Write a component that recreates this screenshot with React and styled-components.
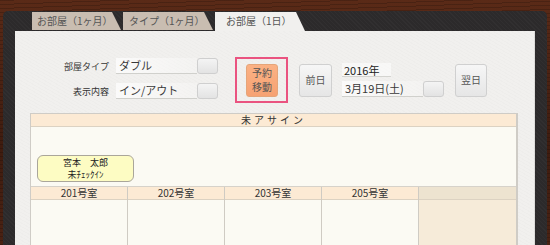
import React from 'react';
import styled, { createGlobalStyle } from 'styled-components';

const GlobalStyle = createGlobalStyle`
  html, body {
    margin: 0;
    padding: 0;
    overflow: hidden;
  }
  body {
    font-family: "Noto Sans CJK JP", "Noto Sans", sans-serif;
  }
`;

// 木目の背景
const Wood = styled.div`
  width: 550px;
  height: 245px;
  box-sizing: border-box;
  padding: 11px 3px 0;
  background:
    repeating-linear-gradient(178deg, rgba(0, 0, 0, 0.18) 0 1px, transparent 1px 4px),
    linear-gradient(180deg, #5a2a17 0%, #3f1c0f 60%, #4a2213 100%);
  overflow: hidden;
`;

// 黒い革のフレーム
const Frame = styled.div`
  height: 100%;
  box-sizing: border-box;
  padding: 1px 12px 0;
  border-radius: 5px 5px 0 0;
  background:
    repeating-linear-gradient(45deg, rgba(255, 255, 255, 0.025) 0 1px, transparent 1px 3px),
    #2c2a2b;
  display: flex;
  flex-direction: column;
`;

const TabBar = styled.div`
  display: flex;
  align-items: flex-start;
  gap: 2px;
  padding-left: 17px;
  height: 19px;
`;

const Tab = styled.div`
  width: ${({ $w }) => $w}px;
  height: ${({ $active }) => ($active ? 19 : 18)}px;
  box-sizing: border-box;
  padding-left: ${({ $pad }) => $pad}px;
  background: ${({ $active }) => ($active ? '#f1f0ee' : '#c9bdb1')};
  color: #555;
  font-size: 10px;
  line-height: 18px;
  white-space: nowrap;
  clip-path: polygon(0 0, calc(100% - 9px) 0, 100% 100%, 0 100%);
`;

// 白い紙のパネル
const Panel = styled.div`
  flex: 1;
  background:
    repeating-linear-gradient(30deg, rgba(0, 0, 0, 0.012) 0 1px, transparent 1px 3px),
    #f1f0ee;
  padding: 26px 17px 0 15px;
  box-shadow: inset -1px 0 0 rgba(0, 0, 0, 0.08);
`;

const Controls = styled.div`
  display: flex;
  align-items: center;
  height: 46px;
  margin-bottom: 10px;
`;

const FormGrid = styled.div`
  display: grid;
  grid-template-columns: 54px 102px;
  column-gap: 7px;
  row-gap: 9px;
  align-items: center;
  margin-left: 25px;
  margin-top: -3px;
`;

const Label = styled.div`
  font-size: 9px;
  color: #333;
  text-align: right;
  white-space: nowrap;
`;

const Select = styled.div`
  display: flex;
  height: 16px;
  width: ${({ $w }) => $w}px;
`;

const SelectValue = styled.div`
  flex: 1;
  font-size: 11px;
  line-height: 15px;
  color: #3a3a3a;
  padding-left: 3px;
  border-bottom: 1px solid #d0d0cc;
  background: linear-gradient(90deg, rgba(255, 255, 255, 0.7), rgba(255, 255, 255, 0.2));
  white-space: nowrap;
`;

const SelectButton = styled.div`
  width: 21px;
  box-sizing: border-box;
  border: 1px solid #cfcfcf;
  border-radius: 3px;
  background: linear-gradient(180deg, #f4f4f4, #e3e3e3);
`;

// 予約移動を囲むピンクの枠
const Highlight = styled.div`
  width: 53px;
  height: 46px;
  box-sizing: border-box;
  border: 2px solid #ea5380;
  margin-left: 17px;
  display: flex;
  align-items: center;
  justify-content: center;
  padding-left: 1px;
`;

const Button = styled.div`
  width: ${({ $w }) => $w || 33}px;
  height: 33px;
  box-sizing: border-box;
  border: 1px solid ${({ $orange }) => ($orange ? '#e5a57a' : '#d0d0d0')};
  border-radius: 3px;
  background: ${({ $orange }) =>
    $orange ? 'linear-gradient(180deg, #fbb184, #f6a273)' : 'linear-gradient(180deg, #f6f6f6, #e6e6e6)'};
  color: #555;
  font-size: 10px;
  line-height: 14px;
  display: flex;
  align-items: center;
  justify-content: center;
  text-align: center;
  margin-left: ${({ $ml }) => $ml || 0}px;
`;

const DateBlock = styled.div`
  display: flex;
  flex-direction: column;
  gap: 4px;
  margin-left: 10px;
  margin-top: -1px;
`;

const YearBox = styled.div`
  width: 49px;
  height: 14px;
  font-size: 11px;
  line-height: 14px;
  color: #222;
  padding-left: 2px;
  box-sizing: border-box;
  border-bottom: 1px solid #d4d4d0;
  background: rgba(255, 255, 255, 0.5);
`;

// スケジュール表
const Table = styled.div`
  width: 488px;
  border: 1px solid #cfccc6;
  border-right-width: 2px;
  background: #fbfaf3;
  box-sizing: border-box;
`;

const HeadCell = styled.div`
  height: 12px;
  background: ${({ $blank }) => ($blank ? '#ede3d0' : '#fcead4')};
  border-bottom: 1px solid #dcd2c2;
  font-size: 10px;
  line-height: 12px;
  color: #333;
  text-align: center;
  letter-spacing: ${({ $wide }) => ($wide ? '3px' : '0')};
`;

const Unassigned = styled.div`
  height: 60px;
  display: flex;
  align-items: flex-end;
  padding: 0 0 4px 6px;
  box-sizing: border-box;
  border-bottom: 1px solid #d6d2ca;
`;

const GuestCard = styled.div`
  width: 97px;
  height: 27px;
  box-sizing: border-box;
  border: 1px solid #aaa69a;
  border-radius: 6px;
  background: #fdfcc3;
  font-size: 9px;
  line-height: 12px;
  color: #222;
  display: flex;
  flex-direction: column;
  align-items: center;
  justify-content: center;
`;

const RoomGrid = styled.div`
  display: grid;
  grid-template-columns: 97px 97px 97px 97px 1fr;
`;

const RoomCol = styled.div`
  border-right: ${({ $last }) => ($last ? 'none' : '1px solid #cfcbc3')};
  background: ${({ $blank }) => ($blank ? '#f6ebd9' : 'transparent')};
  height: 70px;
`;

const rooms = ['201号室', '202号室', '203号室', '205号室'];

const App = () => {
  return (
    <>
      <GlobalStyle />
      <Wood>
        <Frame>
          <TabBar>
            <Tab $w={89} $pad={5}>お部屋（1ヶ月）</Tab>
            <Tab $w={90} $pad={6}>タイプ（1ヶ月）</Tab>
            <Tab $w={90} $pad={11} $active>お部屋（1日）</Tab>
          </TabBar>
          <Panel>
            <Controls>
              <FormGrid>
                <Label>部屋タイプ</Label>
                <Select $w={102}>
                  <SelectValue>ダブル</SelectValue>
                  <SelectButton />
                </Select>
                <Label>表示内容</Label>
                <Select $w={102}>
                  <SelectValue>イン/アウト</SelectValue>
                  <SelectButton />
                </Select>
              </FormGrid>
              <Highlight>
                <Button $orange $w={32}>予約<br />移動</Button>
              </Highlight>
              <Button $ml={11}>前日</Button>
              <DateBlock>
                <YearBox>2016年</YearBox>
                <Select $w={102}>
                  <SelectValue>3月19日(土)</SelectValue>
                  <SelectButton />
                </Select>
              </DateBlock>
              <Button $ml={11} $w={32}>翌日</Button>
            </Controls>
            <Table>
              <HeadCell $wide>未アサイン</HeadCell>
              <Unassigned>
                <GuestCard>
                  <span>宮本　太郎</span>
                  <span>未ﾁｪｯｸｲﾝ</span>
                </GuestCard>
              </Unassigned>
              <RoomGrid>
                {rooms.map((r) => (
                  <RoomCol key={r}>
                    <HeadCell>{r}</HeadCell>
                  </RoomCol>
                ))}
                <RoomCol $blank $last>
                  <HeadCell $blank>&nbsp;</HeadCell>
                </RoomCol>
              </RoomGrid>
            </Table>
          </Panel>
        </Frame>
      </Wood>
    </>
  );
};

export default App;
